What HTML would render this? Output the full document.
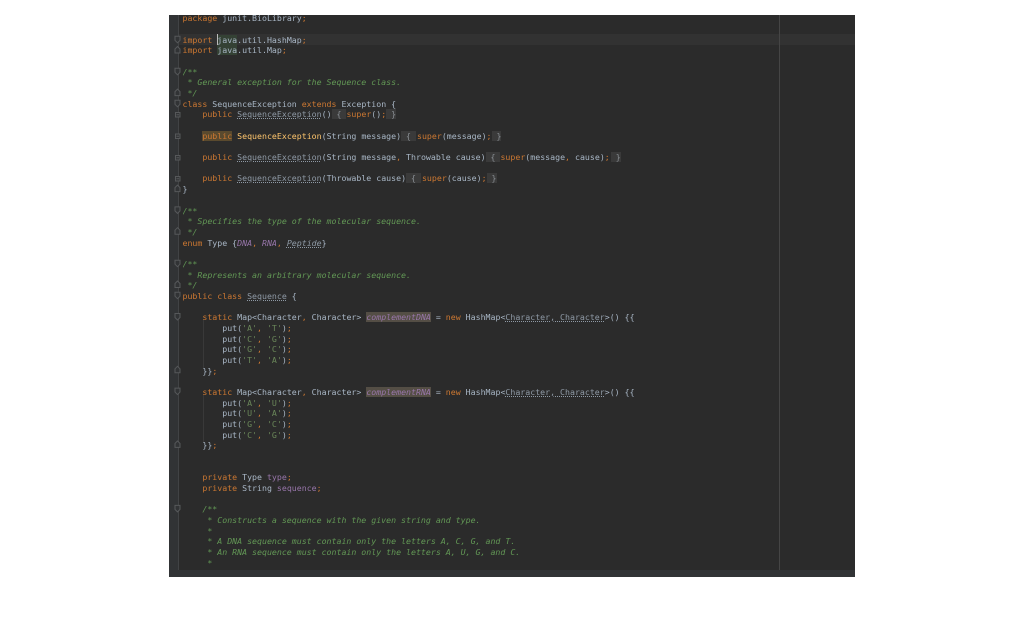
<!DOCTYPE html>
<html>
<head>
<meta charset="utf-8">
<style>
html,body{margin:0;padding:0;background:#fff;width:1024px;height:640px;overflow:hidden}
#p{position:absolute;left:169px;top:15px;width:686px;height:562px;background:#2b2b2b;overflow:hidden}
#g{position:absolute;left:0;top:0;width:9px;height:555px;background:#313335;border-right:1px solid #414345}
#b{position:absolute;left:0;top:555px;width:686px;height:7px;background:#313335}
#m{position:absolute;left:610px;top:0;width:1px;height:555px;background:#454545}
#hl{position:absolute;left:10px;top:19px;width:676px;height:11px;background:#323232}
.ig{position:absolute;left:34px;width:1px;background:#393939}
#c{position:absolute;left:13.5px;top:-1.6px;width:660px;height:556.6px;overflow:hidden}
pre{margin:0;font:8.25px/10.67px "DejaVu Sans Mono","Liberation Mono",monospace;color:#a9b7c6;filter:blur(.25px)}
.k{color:#cc7832}.c{color:#629755;font-style:italic}.s{color:#6a8759}.f{color:#9876aa;font-style:italic}.v{color:#9876aa}
.u{color:#8f9aa6;text-decoration:underline dotted #8f9aa6}
.y{color:#ffc66d}.h{background:#5a4a2e}.fh{background:#544e45}.j{background:#344134}
.b{background:#3a3a3a;color:#8a8f94}.n{color:#a9b7c6}
.x{margin-left:1px}
#car{position:absolute;left:47.5px;top:19px;width:1px;height:11px;background:#bbb}
svg{position:absolute;left:0;top:0}
</style>
</head>
<body>
<div id="p">
<div id="hl"></div>
<div id="g"></div>
<div id="m"></div>
<div class="ig" style="top:304px;height:49px"></div>
<div class="ig" style="top:379px;height:49px"></div>
<div id="c"><pre><span class="k">package</span> junit.BioLibrary<span class="k">;</span>

<span class="k">import</span> <span class="j">java</span>.util.HashMap<span class="k">;</span>
<span class="k">import</span> <span class="j">java</span>.util.Map<span class="k">;</span>

<span class="c">/**</span>
<span class="c"> * General exception for the Sequence class.</span>
<span class="c"> */</span>
<span class="k">class</span> SequenceException <span class="k">extends</span> Exception {
    <span class="k">public</span> <span class="u">SequenceException</span>()<span class="b"> { </span><span class="k">super</span>()<span class="k">;</span><span class="b"> }</span>

    <span class="k h">public</span> <span class="y">SequenceException</span>(String message)<span class="b"> { </span><span class="k x">super</span>(message)<span class="k">;</span><span class="b"> }</span>

    <span class="k">public</span> <span class="u">SequenceException</span>(String message<span class="k">,</span> Throwable cause)<span class="b"> { </span><span class="k">super</span>(message<span class="k">,</span> cause)<span class="k">;</span><span class="b x"> }</span>

    <span class="k">public</span> <span class="u">SequenceException</span>(Throwable cause)<span class="b"> { </span><span class="k x">super</span>(cause)<span class="k">;</span><span class="b"> }</span>
}

<span class="c">/**</span>
<span class="c"> * Specifies the type of the molecular sequence.</span>
<span class="c"> */</span>
<span class="k">enum</span> Type {<span class="f">DNA</span><span class="k">,</span> <span class="f">RNA</span><span class="k">,</span> <span class="u" style="font-style:italic">Peptide</span>}

<span class="c">/**</span>
<span class="c"> * Represents an arbitrary molecular sequence.</span>
<span class="c"> */</span>
<span class="k">public class</span> <span class="u">Sequence</span> {

    <span class="k">static</span> Map&lt;Character<span class="k">,</span> Character&gt; <span class="f fh">complementDNA</span> = <span class="k">new</span> HashMap&lt;<span class="u">Character, Character</span>&gt;() {{
        put(<span class="s">'A'</span><span class="k">,</span> <span class="s">'T'</span>)<span class="k">;</span>
        put(<span class="s">'C'</span><span class="k">,</span> <span class="s">'G'</span>)<span class="k">;</span>
        put(<span class="s">'G'</span><span class="k">,</span> <span class="s">'C'</span>)<span class="k">;</span>
        put(<span class="s">'T'</span><span class="k">,</span> <span class="s">'A'</span>)<span class="k">;</span>
    }}<span class="k">;</span>

    <span class="k">static</span> Map&lt;Character<span class="k">,</span> Character&gt; <span class="f fh">complementRNA</span> = <span class="k">new</span> HashMap&lt;<span class="u">Character, Character</span>&gt;() {{
        put(<span class="s">'A'</span><span class="k">,</span> <span class="s">'U'</span>)<span class="k">;</span>
        put(<span class="s">'U'</span><span class="k">,</span> <span class="s">'A'</span>)<span class="k">;</span>
        put(<span class="s">'G'</span><span class="k">,</span> <span class="s">'C'</span>)<span class="k">;</span>
        put(<span class="s">'C'</span><span class="k">,</span> <span class="s">'G'</span>)<span class="k">;</span>
    }}<span class="k">;</span>


    <span class="k">private</span> Type <span class="v">type</span><span class="k">;</span>
    <span class="k">private</span> String <span class="v">sequence</span><span class="k">;</span>

    <span class="c">/**</span>
<span class="c">     * Constructs a sequence with the given string and type.</span>
<span class="c">     *</span>
<span class="c">     * A DNA sequence must contain only the letters A, C, G, and T.</span>
<span class="c">     * An RNA sequence must contain only the letters A, U, G, and C.</span>
<span class="c">     *</span>
<span class="c">     * @param sequence the sequence string to be used.</span>
</pre></div>
<div id="car"></div>
<div id="b"></div>
<svg width="20" height="555" fill="#313335" stroke="#56585a" stroke-width="1">
<!-- open markers -->
<path d="M6 21.300v4l2.500 2.500l2.500-2.500v-4z"/>
<path d="M6 53.300v4l2.500 2.500l2.500-2.500v-4z"/>
<path d="M6 85.300v4l2.500 2.500l2.500-2.500v-4z"/>
<path d="M6 191.900v4l2.500 2.500l2.500-2.500v-4z"/>
<path d="M6 245.200v4l2.500 2.500l2.500-2.500v-4z"/>
<path d="M6 277.200v4l2.500 2.500l2.500-2.500v-4z"/>
<path d="M6 298.500v4l2.500 2.500l2.500-2.500v-4z"/>
<path d="M6 373.100v4l2.500 2.500l2.500-2.500v-4z"/>
<path d="M6 490.400v4l2.500 2.500l2.500-2.500v-4z"/>
<!-- close markers -->
<path d="M6 38v-4l2.500-2.500l2.500 2.500v4z"/>
<path d="M6 80.600v-4l2.500-2.500l2.500 2.500v4z"/>
<path d="M6 176.600v-4l2.500-2.500l2.500 2.500v4z"/>
<path d="M6 219.200v-4l2.500-2.500l2.500 2.500v4z"/>
<path d="M6 272.500v-4l2.500-2.500l2.500 2.500v4z"/>
<path d="M6 357.800v-4l2.500-2.500l2.500 2.500v4z"/>
<path d="M6 432.400v-4l2.500-2.500l2.500 2.500v4z"/>
<!-- folded boxes -->
<path d="M6.500 97.500h4.500v4.500h-4.500zM7.500 99.750h2.500"/>
<path d="M6.500 119h4.500v4.500h-4.500zM7.500 121.250h2.500"/>
<path d="M6.500 140.500h4.500v4.500h-4.500zM7.500 142.750h2.500"/>
<path d="M6.500 161.500h4.500v4.500h-4.500zM7.500 163.750h2.500"/>
</svg>
</div>
</body>
</html>
